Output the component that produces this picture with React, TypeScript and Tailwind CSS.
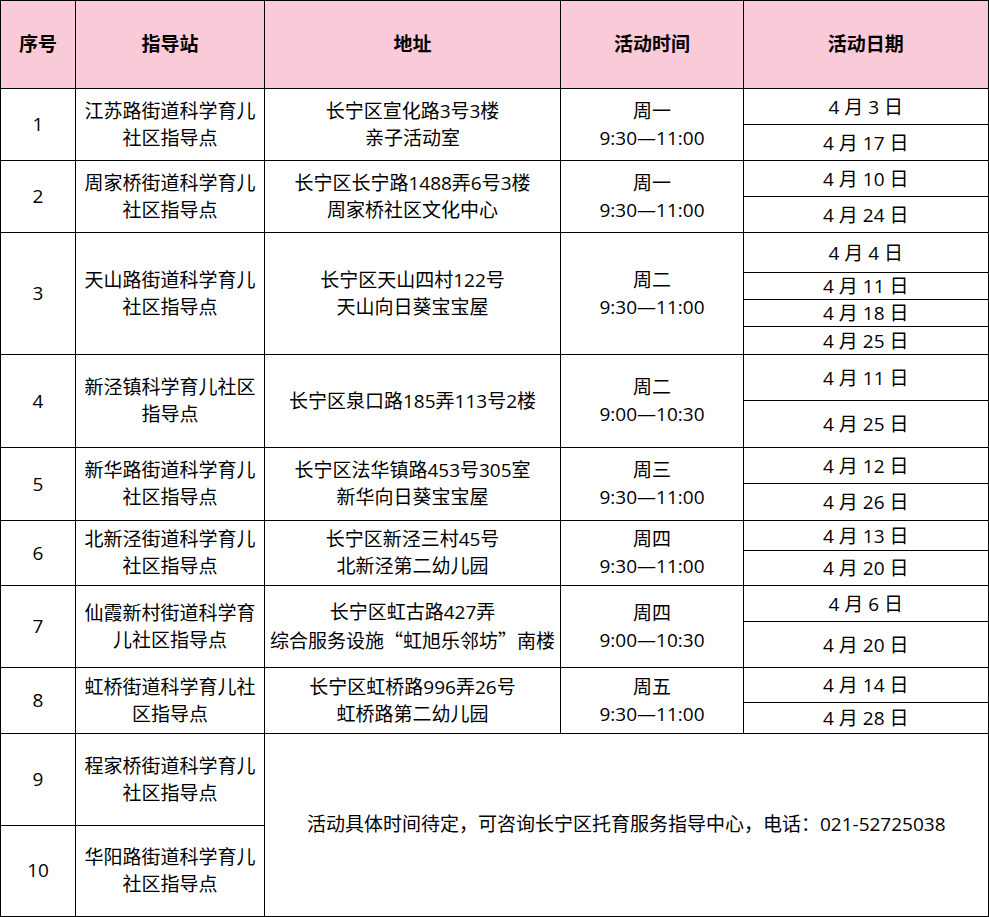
import React from "react";

interface Row {
  no: string;
  station: string[];
  address: React.ReactNode[];
  time: string[];
  dates: { label: string; h: number }[];
}

const cjk = { fontFamily: '"Noto Sans CJK SC", sans-serif' };

const rows: Row[] = [
  {
    no: "1",
    station: ["江苏路街道科学育儿", "社区指导点"],
    address: ["长宁区宣化路3号3楼", "亲子活动室"],
    time: ["周一", "9:30—11:00"],
    dates: [
      { label: "4 月 3 日", h: 36 },
      { label: "4 月 17 日", h: 36 },
    ],
  },
  {
    no: "2",
    station: ["周家桥街道科学育儿", "社区指导点"],
    address: ["长宁区长宁路1488弄6号3楼", "周家桥社区文化中心"],
    time: ["周一", "9:30—11:00"],
    dates: [
      { label: "4 月 10 日", h: 36 },
      { label: "4 月 24 日", h: 36 },
    ],
  },
  {
    no: "3",
    station: ["天山路街道科学育儿", "社区指导点"],
    address: ["长宁区天山四村122号", "天山向日葵宝宝屋"],
    time: ["周二", "9:30—11:00"],
    dates: [
      { label: "4 月 4 日", h: 40 },
      { label: "4 月 11 日", h: 27 },
      { label: "4 月 18 日", h: 27 },
      { label: "4 月 25 日", h: 28 },
    ],
  },
  {
    no: "4",
    station: ["新泾镇科学育儿社区", "指导点"],
    address: ["长宁区泉口路185弄113号2楼"],
    time: ["周二", "9:00—10:30"],
    dates: [
      { label: "4 月 11 日", h: 46 },
      { label: "4 月 25 日", h: 47 },
    ],
  },
  {
    no: "5",
    station: ["新华路街道科学育儿", "社区指导点"],
    address: ["长宁区法华镇路453号305室", "新华向日葵宝宝屋"],
    time: ["周三", "9:30—11:00"],
    dates: [
      { label: "4 月 12 日", h: 36 },
      { label: "4 月 26 日", h: 37 },
    ],
  },
  {
    no: "6",
    station: ["北新泾街道科学育儿", "社区指导点"],
    address: ["长宁区新泾三村45号", "北新泾第二幼儿园"],
    time: ["周四", "9:30—11:00"],
    dates: [
      { label: "4 月 13 日", h: 30 },
      { label: "4 月 20 日", h: 35 },
    ],
  },
  {
    no: "7",
    station: ["仙霞新村街道科学育", "儿社区指导点"],
    address: [
      "长宁区虹古路427弄",
      <>
        综合服务设施<span style={cjk}>“</span>虹旭乐邻坊<span style={cjk}>”</span>南楼
      </>,
    ],
    time: ["周四", "9:00—10:30"],
    dates: [
      { label: "4 月 6 日", h: 36 },
      { label: "4 月 20 日", h: 46 },
    ],
  },
  {
    no: "8",
    station: ["虹桥街道科学育儿社", "区指导点"],
    address: ["长宁区虹桥路996弄26号", "虹桥路第二幼儿园"],
    time: ["周五", "9:30—11:00"],
    dates: [
      { label: "4 月 14 日", h: 35 },
      { label: "4 月 28 日", h: 31 },
    ],
  },
];

const cell = "border border-black text-center align-middle p-0";

function Lines({ lines }: { lines: React.ReactNode[] }) {
  return (
    <>
      {lines.map((l, i) => (
        <div key={i} className="whitespace-nowrap">
          {l}
        </div>
      ))}
    </>
  );
}

export default function App() {
  return (
    <div
      className="w-[989px] h-[917px] bg-white text-black overflow-hidden"
      style={{ fontFamily: '"Open Sans", "Noto Sans CJK SC", sans-serif' }}
    >
      <table className="table-fixed border-collapse w-[988px] border-r-2 border-b-2 border-black text-[19px] leading-[27px]">
        <colgroup>
          <col className="w-[75px]" />
          <col className="w-[189px]" />
          <col className="w-[296px]" />
          <col className="w-[183px]" />
          <col className="w-[245px]" />
        </colgroup>
        <thead>
          <tr className="h-[88px] bg-[#f9cad7] font-bold text-[19px]">
            <th className={cell}>序号</th>
            <th className={cell}>指导站</th>
            <th className={cell}>地址</th>
            <th className={cell}>活动时间</th>
            <th className={cell}>活动日期</th>
          </tr>
        </thead>
        <tbody>
          {rows.map((r) =>
            r.dates.map((d, i) => (
              <tr key={r.no + "-" + i} style={{ height: d.h }}>
                {i === 0 && (
                  <>
                    <td className={cell} rowSpan={r.dates.length}>
                      {r.no}
                    </td>
                    <td className={cell} rowSpan={r.dates.length}>
                      <Lines lines={r.station} />
                    </td>
                    <td className={cell} rowSpan={r.dates.length}>
                      <Lines lines={r.address} />
                    </td>
                    <td className={cell} rowSpan={r.dates.length}>
                      <Lines lines={r.time} />
                    </td>
                  </>
                )}
                <td className={cell + " whitespace-pre leading-[20px]"}>{d.label}</td>
              </tr>
            ))
          )}
          <tr className="h-[92px]">
            <td className={cell}>9</td>
            <td className={cell}>
              <Lines lines={["程家桥街道科学育儿", "社区指导点"]} />
            </td>
            <td className={cell} colSpan={3} rowSpan={2}>
              活动具体时间待定，可咨询长宁区托育服务指导中心，电话：021-52725038
            </td>
          </tr>
          <tr className="h-[91px]">
            <td className={cell}>10</td>
            <td className={cell}>
              <Lines lines={["华阳路街道科学育儿", "社区指导点"]} />
            </td>
          </tr>
        </tbody>
      </table>
    </div>
  );
}
